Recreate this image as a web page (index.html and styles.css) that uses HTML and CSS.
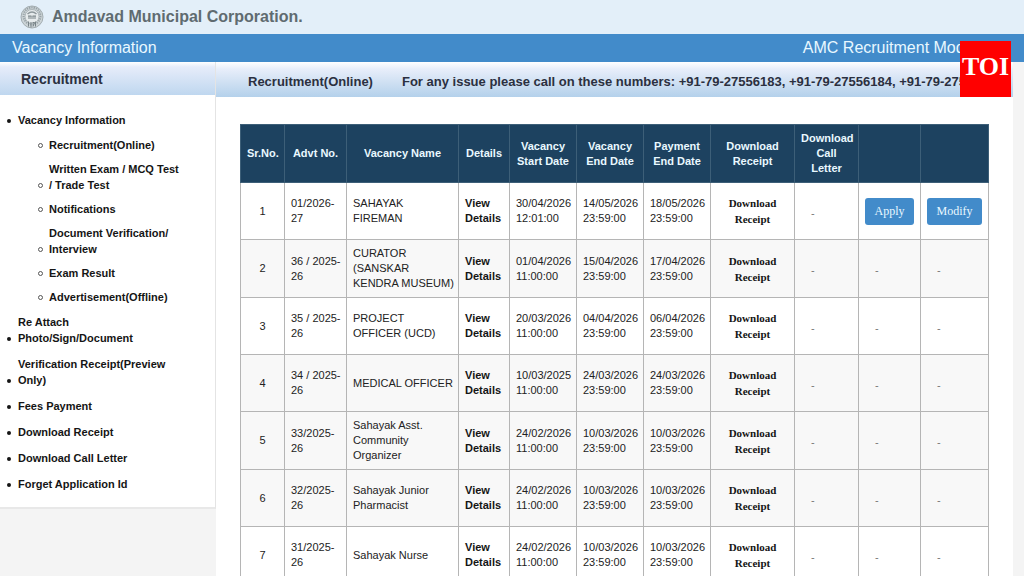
FILE: index.html
```html
<!DOCTYPE html>
<html lang="en">
<head>
    <meta charset="UTF-8">
    <meta name="viewport" content="width=device-width, initial-scale=1.0">
    <title>Amdavad Municipal Corporation</title>
    <link rel="stylesheet" href="styles.css">
</head>
<body>
    <header class="site-header">
        <svg class="logo" viewBox="0 0 24 24" aria-hidden="true">
            <circle cx="12" cy="12" r="11" fill="#cdd5d8" stroke="#a3adb1" stroke-width="1"/>
            <circle cx="12" cy="11" r="8.5" fill="none" stroke="#98a2a6" stroke-width="2" stroke-dasharray="1.3 1"/>
            <circle cx="12" cy="11.500" r="7" fill="#e6ebec" stroke="#98a2a6" stroke-width="0.7"/>
            <path d="M7.500 9q4.500-4 9 0" fill="none" stroke="#8d979b" stroke-width="1.4"/>
            <path d="M8 11h3.500M12.500 11H16M9 11v3M11 11v3M13 11v3M15 11v3" fill="none" stroke="#788387" stroke-width="1"/>
            <path d="M8.500 16.500v5M11 17v5.500M15.500 16.500v5M12.500 17.500h2l-1.500 4" fill="none" stroke="#788387" stroke-width="1"/>
        </svg>
        <h1>Amdavad Municipal Corporation.</h1>
    </header>
    <div class="title-bar">
        <span>Vacancy Information</span>
        <span>AMC Recruitment Module</span>
    </div>

    <div class="page">
        <nav class="sidebar">
            <h2>Recruitment</h2>
            <ul class="menu">
                <li><a href="#">Vacancy Information</a>
                    <ul class="submenu">
                        <li><a href="#">Recruitment(Online)</a></li>
                        <li><a href="#">Written Exam / MCQ Test / Trade Test</a></li>
                        <li><a href="#">Notifications</a></li>
                        <li><a href="#">Document Verification/ Interview</a></li>
                        <li><a href="#">Exam Result</a></li>
                        <li><a href="#">Advertisement(Offline)</a></li>
                    </ul>
                </li>
                <li><a href="#">Re Attach Photo/Sign/Document</a></li>
                <li><a href="#">Verification Receipt(Preview Only)</a></li>
                <li><a href="#">Fees Payment</a></li>
                <li><a href="#">Download Receipt</a></li>
                <li><a href="#">Download Call Letter</a></li>
                <li><a href="#">Forget Application Id</a></li>
            </ul>
        </nav>

        <main class="content">
            <div class="notice">
                <span>Recruitment(Online)</span>
                <span>For any issue please call on these numbers: +91-79-27556183, +91-79-27556184, +91-79-27556185</span>
            </div>
            <table class="vacancies">
                <colgroup>
                    <col class="c-sr"><col class="c-advt"><col class="c-name"><col class="c-details">
                    <col class="c-date"><col class="c-date"><col class="c-date"><col class="c-receipt">
                    <col class="c-letter"><col class="c-apply"><col class="c-modify">
                </colgroup>
                <thead>
                    <tr>
                        <th>Sr.No.</th>
                        <th>Advt No.</th>
                        <th>Vacancy Name</th>
                        <th>Details</th>
                        <th>Vacancy Start Date</th>
                        <th>Vacancy End Date</th>
                        <th>Payment End Date</th>
                        <th>Download Receipt</th>
                        <th>Download Call Letter</th>
                        <th></th>
                        <th></th>
                    </tr>
                </thead>
                <tbody>
                    <tr>
                        <td class="num">1</td>
                        <td class="text">01/2026-27</td>
                        <td class="text">SAHAYAK<br>FIREMAN</td>
                        <td><a href="#">View Details</a></td>
                        <td>30/04/2026 12:01:00</td>
                        <td>14/05/2026 23:59:00</td>
                        <td>18/05/2026 23:59:00</td>
                        <td class="receipt"><a href="#">Download Receipt</a></td>
                        <td class="dash">-</td>
                        <td><button type="button" class="btn">Apply</button></td>
                        <td><button type="button" class="btn">Modify</button></td>
                    </tr>
                    <tr class="shaded">
                        <td class="num">2</td>
                        <td class="text">36 / 2025-26</td>
                        <td class="text">CURATOR (SANSKAR KENDRA MUSEUM)</td>
                        <td><a href="#">View Details</a></td>
                        <td>01/04/2026 11:00:00</td>
                        <td>15/04/2026 23:59:00</td>
                        <td>17/04/2026 23:59:00</td>
                        <td class="receipt"><a href="#">Download Receipt</a></td>
                        <td class="dash">-</td>
                        <td class="dash">-</td>
                        <td class="dash">-</td>
                    </tr>
                    <tr>
                        <td class="num">3</td>
                        <td class="text">35 / 2025-26</td>
                        <td class="text">PROJECT<br>OFFICER (UCD)</td>
                        <td><a href="#">View Details</a></td>
                        <td>20/03/2026 11:00:00</td>
                        <td>04/04/2026 23:59:00</td>
                        <td>06/04/2026 23:59:00</td>
                        <td class="receipt"><a href="#">Download Receipt</a></td>
                        <td class="dash">-</td>
                        <td class="dash">-</td>
                        <td class="dash">-</td>
                    </tr>
                    <tr class="shaded">
                        <td class="num">4</td>
                        <td class="text">34 / 2025-26</td>
                        <td class="text">MEDICAL OFFICER</td>
                        <td><a href="#">View Details</a></td>
                        <td>10/03/2025 11:00:00</td>
                        <td>24/03/2026 23:59:00</td>
                        <td>24/03/2026 23:59:00</td>
                        <td class="receipt"><a href="#">Download Receipt</a></td>
                        <td class="dash">-</td>
                        <td class="dash">-</td>
                        <td class="dash">-</td>
                    </tr>
                    <tr class="shaded">
                        <td class="num">5</td>
                        <td class="text">33/2025-26</td>
                        <td class="text">Sahayak Asst. Community Organizer</td>
                        <td><a href="#">View Details</a></td>
                        <td>24/02/2026 11:00:00</td>
                        <td>10/03/2026 23:59:00</td>
                        <td>10/03/2026 23:59:00</td>
                        <td class="receipt"><a href="#">Download Receipt</a></td>
                        <td class="dash">-</td>
                        <td class="dash">-</td>
                        <td class="dash">-</td>
                    </tr>
                    <tr class="shaded">
                        <td class="num">6</td>
                        <td class="text">32/2025-26</td>
                        <td class="text">Sahayak Junior Pharmacist</td>
                        <td><a href="#">View Details</a></td>
                        <td>24/02/2026 11:00:00</td>
                        <td>10/03/2026 23:59:00</td>
                        <td>10/03/2026 23:59:00</td>
                        <td class="receipt"><a href="#">Download Receipt</a></td>
                        <td class="dash">-</td>
                        <td class="dash">-</td>
                        <td class="dash">-</td>
                    </tr>
                    <tr>
                        <td class="num">7</td>
                        <td class="text">31/2025-26</td>
                        <td class="text">Sahayak Nurse</td>
                        <td><a href="#">View Details</a></td>
                        <td>24/02/2026 11:00:00</td>
                        <td>10/03/2026 23:59:00</td>
                        <td>10/03/2026 23:59:00</td>
                        <td class="receipt"><a href="#">Download Receipt</a></td>
                        <td class="dash">-</td>
                        <td class="dash">-</td>
                        <td class="dash">-</td>
                    </tr>
                </tbody>
            </table>
        </main>
    </div>

    <div class="toi-badge">TOI</div>
</body>
</html>
```

FILE: styles.css
```css
*,
*::before {
    box-sizing: border-box;
}

body {
    margin: 0;
    height: 100vh;
    overflow: hidden;
    background: #f4f4f4;
    color: #222;
    font-family: "Liberation Sans", Arial, sans-serif;
    font-size: 11px;
    line-height: 15px;
}

a {
    color: inherit;
    text-decoration: none;
}

/* Header */
.site-header {
    display: flex;
    align-items: center;
    gap: 8px;
    height: 34px;
    padding-left: 20px;
    background: #e3eff9;
}

.logo {
    width: 24px;
    height: 24px;
}

.site-header h1 {
    margin: 0;
    color: #5f6b70;
    font-size: 16px;
    line-height: 20px;
}

.title-bar {
    display: flex;
    justify-content: space-between;
    height: 28px;
    padding: 0 38px 0 12px;
    background: #428bca;
    color: #e9f8ff;
    font-size: 16px;
    line-height: 28px;
}

/* Columns */
.page {
    display: flex;
    align-items: flex-start;
    padding-right: 11px;
}

.sidebar {
    flex: 0 0 216px;
    background: #fff;
    border-right: 1px solid #e4e4e4;
    border-bottom: 2px solid #e8e8e8;
    color: #151515;
    font-weight: bold;
    line-height: 16px;
}

.sidebar h2 {
    margin: 0;
    padding: 2px 21px 0;
    background: linear-gradient(#fff, #e6ecfa 15%, #bfd7ef);
    color: #2b3040;
    font-size: 14px;
    line-height: 31px;
}

.menu,
.submenu {
    margin: 0;
    list-style: none;
}

.menu {
    padding: 17px 31px 5px 18px;
}

.submenu {
    padding: 9px 0 0 31px;
}

.menu li {
    margin-bottom: 10px;
}

.menu > li:first-child {
    margin-bottom: 9px;
}

.submenu li {
    margin-bottom: 8px;
}

.menu a {
    display: block;
    position: relative;
}

/* bullets sit on the last line of a wrapped item */
.menu a::before {
    content: "";
    position: absolute;
    left: -11px;
    bottom: 5px;
    width: 4px;
    height: 4px;
    border-radius: 50%;
    background: #151515;
}

.submenu a::before {
    width: 5px;
    height: 5px;
    border: 1px solid #555;
    background: none;
}

.content {
    flex: 1;
    min-width: 0;
    min-height: 514px;
    background: #fff;
}

.notice {
    display: flex;
    gap: 29px;
    height: 35px;
    padding: 4px 0 0 32px;
    overflow: hidden;
    background: linear-gradient(#fff, #e8eefa 20%, #b4d1eb);
    color: #2b3040;
    font-size: 13px;
    font-weight: bold;
    line-height: 31px;
    white-space: nowrap;
}

/* Vacancy table */
.vacancies {
    width: calc(100% - 48px);
    margin: 27px 24px 0;
    border-collapse: collapse;
    table-layout: fixed;
}

.c-sr { width: 44px; }
.c-advt { width: 62px; }
.c-name { width: 112px; }
.c-details { width: 51px; }
.c-date { width: 67px; }
.c-receipt { width: 84px; }
.c-letter { width: 64px; }
.c-apply { width: 62px; }
.c-modify { width: 68px; }

.vacancies th,
.vacancies td {
    height: 57px;
    padding: 6px;
    border: 1px solid #b5b5b5;
    text-align: left;
    vertical-align: middle;
}

.vacancies th {
    background: #1d4260;
    border: 1px solid #3d5f78;
    color: #e9f8ff;
    text-align: center;
}

.vacancies .shaded {
    background: #f8f8f8;
}

.vacancies td a {
    color: #151515;
    font-weight: bold;
}

.vacancies .num {
    text-align: center;
}

.vacancies .text {
    padding-right: 2px;
}

.vacancies .receipt {
    font-family: "Liberation Serif", "Times New Roman", serif;
    line-height: 16px;
    text-align: center;
}

.vacancies .dash {
    padding: 10px 16px 6px;
    color: #777;
}

.btn {
    display: block;
    width: 100%;
    height: 27px;
    padding: 0;
    border: 0;
    border-radius: 3px;
    background: #428bca;
    color: #e9f8ff;
    font-family: "Liberation Serif", "Times New Roman", serif;
    font-size: 12px;
}

.toi-badge {
    position: fixed;
    top: 41px;
    right: 13px;
    width: 51px;
    height: 56px;
    background: #f00;
    color: #fff;
    font-family: "Liberation Serif", "Times New Roman", serif;
    font-size: 26px;
    font-weight: bold;
    line-height: 51px;
    text-align: center;
}
```
